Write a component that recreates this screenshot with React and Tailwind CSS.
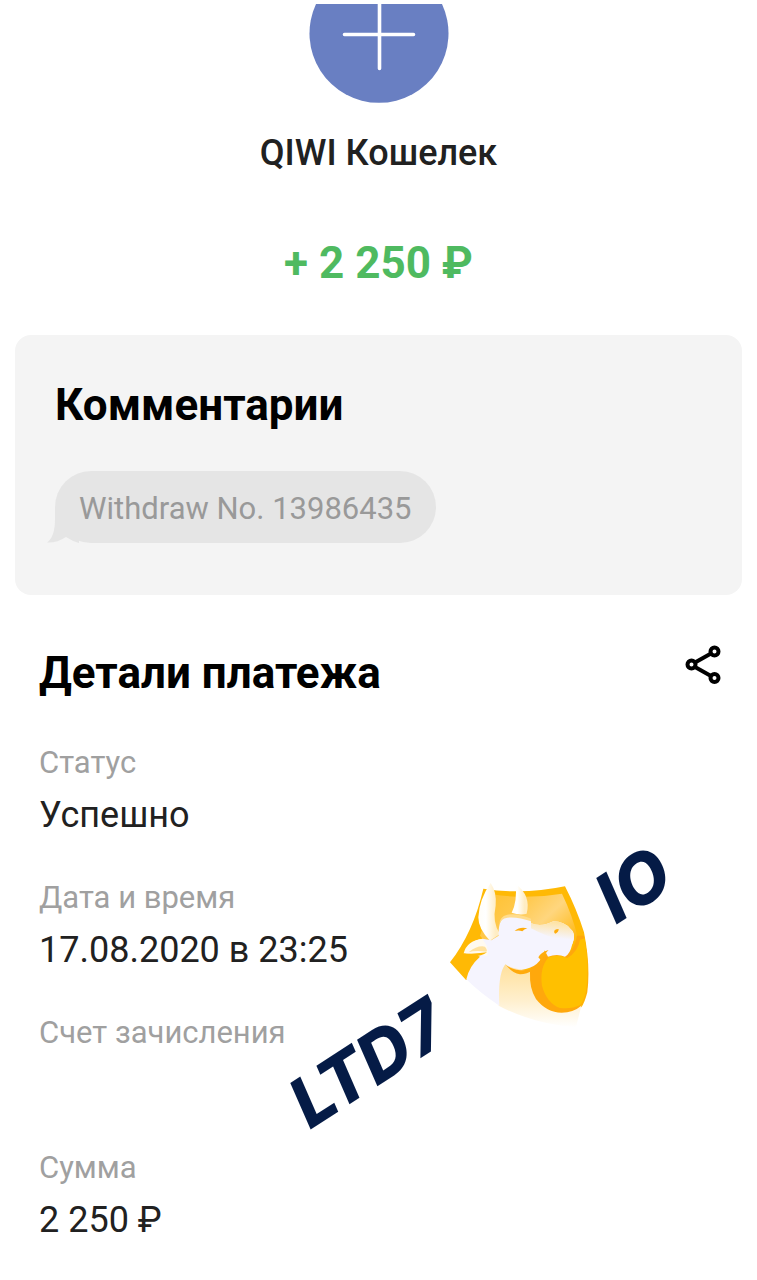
const details = [
  { label: 'Статус', value: 'Успешно' },
  { label: 'Дата и время', value: '17.08.2020 в 23:25' },
  { label: 'Счет зачисления', value: '' },
  { label: 'Сумма', value: '2 250 ₽' }
]

const ProviderIcon = () => (
  <svg className="h-[103px] w-[140px]" viewBox="0 0 140 103" aria-hidden="true">
    <path d="M7 4H133A69.500 69.500 0 1 1 7 4Z" fill="#697fc2" />
    <path d="M35.500 34.500H104.500M70.500 4V68.500" stroke="#fff" strokeWidth="3.600" strokeLinecap="round" fill="none" />
    <path d="M60 0H80V4H60Z" fill="#fff" />
  </svg>
)

const ShareIcon = () => (
  <svg className="h-10 w-9" viewBox="0 0 36 40" fill="none" stroke="#000" strokeWidth="4" aria-hidden="true">
    <path d="M10 17.500L26 8.500M10 22L26 31" />
    <circle cx="6.500" cy="19.500" r="4" />
    <circle cx="29.500" cy="6.500" r="4" />
    <circle cx="29.500" cy="33" r="4" />
  </svg>
)

const BullLogo = () => (
  <g transform="translate(150 30) scale(0.3333)">
    <defs>
      <linearGradient id="panel" x1="0" y1="0" x2="0.9" y2="0.7">
        <stop offset="0" stopColor="#ffc02b" />
        <stop offset="0.35" stopColor="#ffc84a" />
        <stop offset="0.65" stopColor="#ffd67e" />
        <stop offset="1" stopColor="#ffb914" />
      </linearGradient>
      <linearGradient id="fade" x1="0" y1="0" x2="0" y2="1">
        <stop offset="0" stopColor="#ffdf98" />
        <stop offset="0.6" stopColor="#fff0cf" />
        <stop offset="1" stopColor="#fff" />
      </linearGradient>
      <linearGradient id="horn" x1="0" y1="0" x2="1" y2="0">
        <stop offset="0" stopColor="#fffdf8" />
        <stop offset="0.35" stopColor="#fff" />
        <stop offset="0.8" stopColor="#ffedc4" />
      </linearGradient>
      <linearGradient id="muzzle" x1="0.5" y1="0" x2="0.3" y2="1">
        <stop offset="0" stopColor="#ffe3a0" />
        <stop offset="0.7" stopColor="#f5f4fe" />
      </linearGradient>
    </defs>
    {/* shield */}
    <path d="M160 59Q280 78 405 52Q440 120 462 190Q482 290 472 370Q464 402 454 415L300 400L220 280L108 333L60 280Q130 190 160 59Z" fill="#ffb905" />
    <path d="M185 76Q290 92 396 74Q428 140 443 205L400 260L230 290L150 200Q175 130 185 76Z" fill="url(#panel)" />
    <path d="M206 280L232 285Q300 320 320 290L454 410L438 475Q310 465 206 410Z" fill="url(#fade)" />
    <path d="M300 310Q302 262 350 255L405 262Q436 240 441 200L462 200Q482 300 470 370Q460 402 452 412Q430 431 395 431Q350 431 318 390Q298 360 300 310Z" fill="#ffa80c" />
    <path d="M356 265Q380 255 412 267Q444 248 450 212L464 208Q480 300 468 368Q460 400 450 409Q425 421 390 417Q350 402 336 350Q328 296 356 265Z" fill="#ffc000" />
    {/* horns */}
    <path d="M182 42Q148 90 145 145Q145 180 180 215L210 195Q186 160 197 110Q201 70 182 42Z" fill="url(#horn)" />
    <path d="M257 45Q262 98 245 131Q270 140 290 134Q304 80 257 45Z" fill="url(#horn)" />
    {/* head, ear and neck */}
    <path d="M226 284Q238 300 270 304Q318 306 334 275L354 245L352 262Q330 290 310 302Q290 316 270 316Q244 312 226 284Z" fill="#ffaa0c" />
    <path d="M206 200Q204 150 228 143Q262 138 303 151L303 163Q335 175 370 157Q403 158 421 179Q440 193 427 225Q420 256 405 263Q382 253 354 263L344 244Q330 298 274 302Q246 300 226 286Q203 315 208 410Q150 372 109 331Q117 292 150 263Q132 254 106 253Q113 216 158 209L184 214Z" fill="#f5f4fe" />
    <path d="M303 163Q335 175 370 157Q403 158 421 179Q440 193 427 225Q400 208 380 210Q345 200 303 178Z" fill="url(#muzzle)" />
    <path d="M101 253Q110 215 157 209L170 230Q176 246 171 261Q128 252 101 253Z" fill="#fffaf0" />
    <path d="M116 250Q143 228 165 233Q174 245 169 248Q135 243 116 250Z" fill="#ffe2a0" />
    <path d="M98 257Q128 254 171 250Q144 270 98 257Z" fill="#ffb905" />
    <path d="M208 168Q212 148 232 146Q265 143 303 157V149Q262 131 232 137Q208 142 208 168Z" fill="#ffdc8c" />
    <path d="M254 186Q270 172 292 178Q282 181 277 187Q267 182 254 186Z" fill="#ffad0c" />
    <path d="M373 191Q370 180 386 180Q387 188 376 194Z" fill="#ffad0c" />
    <path d="M325 265Q332 250 356 243Q346 252 334 275Z" fill="#ffad0c" />
  </g>
)

const Watermark = () => (
  <svg
    className="pointer-events-none absolute right-[17px] top-[184px] h-[420px] w-[520px]"
    viewBox="-60 -60 520 420"
    role="img"
    aria-label="LTD7 IO"
  >
    <BullLogo />
    <g className="font-['Inter',sans-serif] text-[69px] font-extrabold italic" fill="#051b46">
      <text transform="translate(30 291) rotate(-33)">LTD7</text>
      <text transform="translate(336 86) rotate(-33)">IO</text>
    </g>
  </svg>
)

const DetailRow = ({ label, value }) => (
  <div>
    <dt className="text-[31px] leading-10 text-[#a0a0a0]">{label}</dt>
    <dd className="mt-2 h-12 text-[36px] leading-[48px] text-[#212121]">{value}</dd>
  </div>
)

const App = () => {
  return (
    <main className="min-h-screen overflow-x-hidden bg-white font-['Roboto',sans-serif]">
      {/* Payment summary */}
      <header className="flex flex-col items-center">
        <ProviderIcon />
        <h1 className="mt-[26px] text-[36px] font-medium leading-[48px] text-[#212121]">QIWI Кошелек</h1>
        <p className="mt-[58px] text-[44px] font-bold leading-[56px] text-[#4fba60]">+ 2 250 ₽</p>
      </header>

      {/* Comments */}
      <section className="mx-[15px] mt-11 rounded-2xl bg-[#f4f4f4] px-10 pb-[52px] pt-[42px]">
        <h2 className="text-[44px] font-bold leading-[56px] text-black">Комментарии</h2>
        <div className="relative mt-[38px] w-fit rounded-[36px] bg-[#e5e5e5] px-6 pb-[14px] pt-[18px] text-[31px] leading-10 text-[#999999]">
          <svg className="absolute -left-2 bottom-0 h-9 w-8" viewBox="0 0 32 36" aria-hidden="true">
            <path d="M8 0V12Q8 30 0 35.500Q10 36 19 30Q25 34 32 36V0Z" fill="#e5e5e5" />
          </svg>
          <p className="relative">Withdraw No. 13986435</p>
        </div>
      </section>

      {/* Payment details */}
      <section className="relative pb-8 pl-[39px] pr-9">
        <div className="flex items-start justify-between pt-[50px]">
          <h2 className="text-[44px] font-bold leading-[56px] text-black">Детали платежа</h2>
          <button type="button" aria-label="Поделиться">
            <ShareIcon />
          </button>
        </div>
        <dl className="mt-[42px] flex flex-col gap-[39px]">
          {details.map((item) => (
            <DetailRow key={item.label} label={item.label} value={item.value} />
          ))}
        </dl>
        <Watermark />
      </section>
    </main>
  )
}

export default App
